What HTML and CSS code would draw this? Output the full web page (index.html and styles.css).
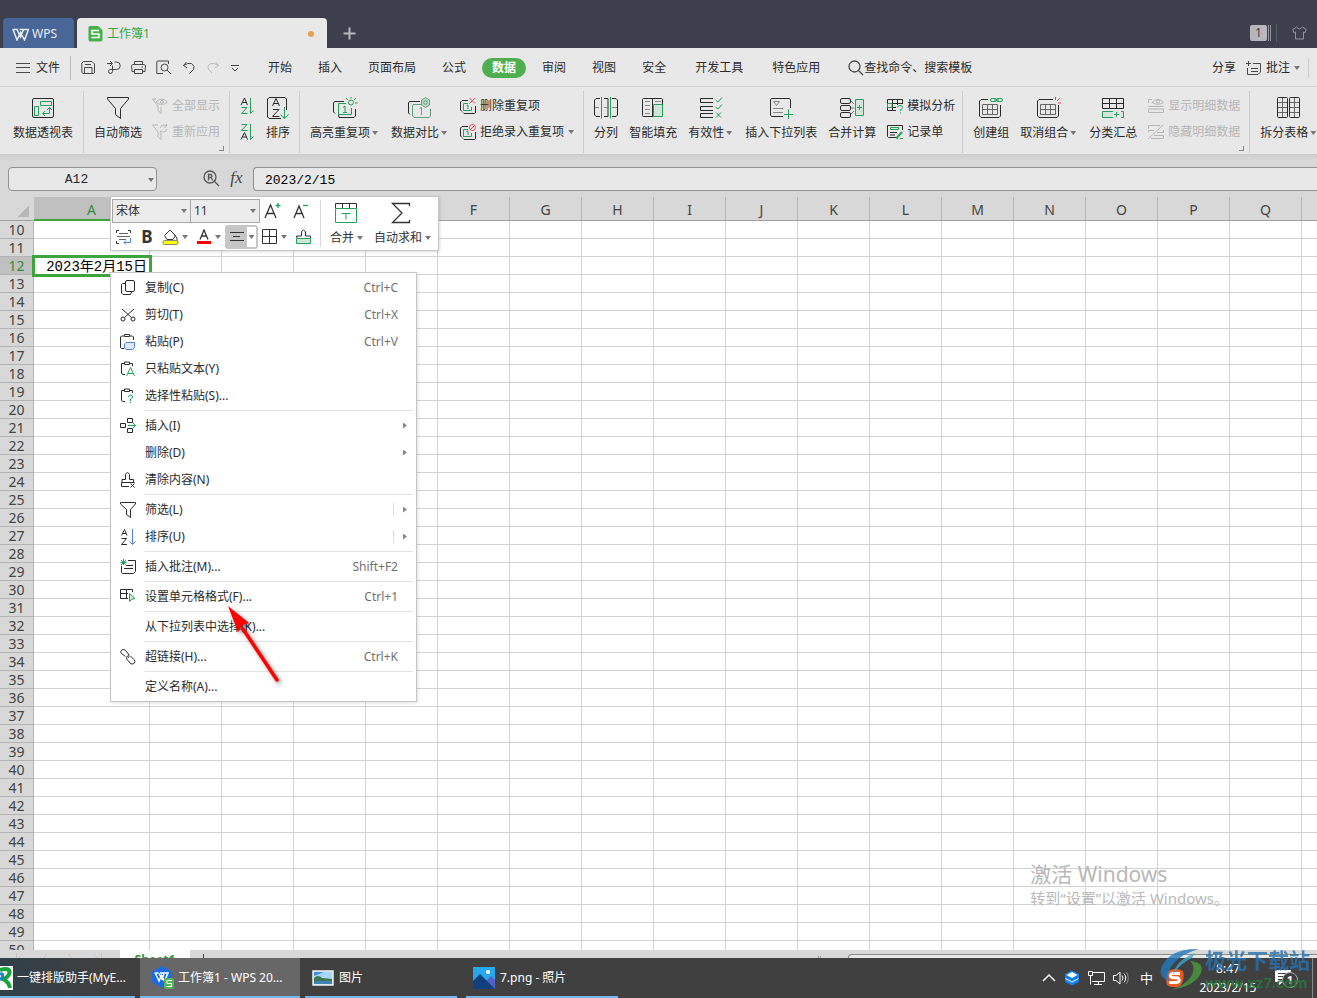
FILE: index.html
```html
<!DOCTYPE html>
<html lang="zh-CN">
<head>
<meta charset="utf-8">
<title>工作簿1 - WPS</title>
<link rel="stylesheet" href="styles.css">
</head>
<body>
<div class="app">
  <header class="titlebar">
    <button class="wps-tab"><svg width="17" height="13" viewBox="0 0 17 13" stroke-width="1.5"><path d="M.5 1.5H6M7.5 1.5H16.5L12.5 12 8.500 4.500 5 12 1 1.500M5 1.500 8.500 9 11.500 1.500"/></svg>WPS</button>
    <button class="doc-tab"><svg width="15" height="17" viewBox="0 0 15 17"><path fill="#45b04a" stroke="none" d="M2 1H10L14.500 5V14.500Q14.500 16.500 12.500 16.500H2Q.5 16.500 .5 14.500V2.500Q.5 1 2 1Z"/><path stroke="#fff" stroke-width="1.500" d="M11 5.500H4V9H11V12.500H3.500"/></svg><span>工作簿1</span><i class="dot"></i></button>
    <button class="plus" aria-label="新建"><svg width="13" height="13" viewBox="0 0 13 13" stroke-width="2"><path d="M6.500 .5V12.500M.5 6.500H12.500"/></svg></button>
    <div class="title-right"><span class="count">1</span><svg width="4" height="16" viewBox="0 0 4 16"><path d="M1.500 0V16M3.500 0V16"/></svg><i class="bar"></i><svg width="15" height="14" viewBox="0 0 15 14"><path d="M4.500 1 .8 3.500 1.800 6.500 3.500 6V13H11.500V6L13.200 6.500 14.200 3.500 10.500 1Q7.500 4.500 4.500 1Z"/></svg></div>
  </header>

  <nav class="menubar">
    <button class="file"><svg width="14" height="10" viewBox="0 0 14 10"><path d="M0 .5H14M0 4.500H14M0 9.500H14"/></svg>文件</button>
    <div class="quick">
      <button aria-label="保存"><svg width="15" height="15" viewBox="0 0 15 15"><path d="M2.500 1.500H11L13.500 4V12.500L12.500 13.500H2L.8 12.500V3ZM3.500 13V7.500H11V13M4 4.500H10"/></svg></button>
      <button aria-label="输出"><svg width="15" height="15" viewBox="0 0 15 15"><path d="M1 3.500H6M4 1 6.500 3.500 4 6M8.500 2H10.500A3.500 3.500 0 0 1 10.500 9.500H4A2 2 0 1 0 6.500 11.500V5.500"/></svg></button>
      <button aria-label="打印"><svg width="15" height="15" viewBox="0 0 15 15"><path d="M3.500 4.500V1.500H11.500V4.500M3 11.500H1L.5 5.500 2 4.500H13L14.500 5.500 14 11.500H12M3.500 9.500H11.500V13.500H3.500Z M10.500 7H12"/></svg></button>
      <button aria-label="打印预览"><svg width="16" height="15" viewBox="0 0 16 15"><path d="M12.500 4V1H1.500L.8 2V13.500H7"/><circle cx="8.500" cy="7.500" r="3.500"/><path d="M11 10 15 14"/></svg></button>
      <button aria-label="撤销"><svg width="14" height="15" viewBox="0 0 14 15"><path d="M4.500 2 1.500 5.500 5 8M1.500 5.500Q6 2.500 9.500 3.500 13.500 6 11.500 9.500L7.500 13.500"/></svg></button>
      <button class="off" aria-label="恢复"><svg width="14" height="15" viewBox="0 0 14 15"><path d="M9.500 2 12.500 5.500 9 8M12.500 5.500Q8 2.500 4.500 3.500 .5 6 2.500 9.500L6 13"/></svg></button>
      <button aria-label="自定义"><svg width="10" height="15" viewBox="0 0 10 15"><path d="M1 5.500H9M2 8 5 11 8 8"/></svg></button>
    </div>
    <div class="tabs"><button>开始</button><button>插入</button><button>页面布局</button><button>公式</button><button class="on">数据</button><button>审阅</button><button>视图</button><button>安全</button><button class="wide">开发工具</button><button class="wide">特色应用</button></div>
    <button class="search"><svg width="16" height="16" viewBox="0 0 16 16" stroke-width="1.3"><circle cx="6.500" cy="6.500" r="5.500"/><path d="M10.500 10.500 15 15"/></svg>查找命令、搜索模板</button>
    <div class="share"><button>分享</button><button class="note"><svg width="16" height="15" viewBox="0 0 16 15"><path d="M7 2.500H14.500V11L12 13.500H1.500V7M0 2.500H5M2.500 0V5M5 7.500H12M5 10.500H12"/></svg>批注<i class="caret"></i></button></div>
  </nav>

  <section class="ribbon">
    <div class="group first">
      <button class="big"><svg width="24" height="22" viewBox="0 0 24 22"><rect x="1.500" y="1.500" width="21" height="19" rx="1.500"/><path class="g" d="M9.500 4.500H20.500V8.500H9.500ZM3.500 9.500H7.500V18.500H3.500ZM12 16.500H18.500V10.500M16 13 18.500 10.500 21 13M14 14 11.500 16.500 14 19"/></svg><span>数据透视表</span></button>
    </div>
    <div class="group g2">
      <button class="big"><svg width="24" height="24" viewBox="0 0 24 24"><path d="M1.500 1.500H22.500V3L14.500 12.500V22.500L9.500 18.500V12.500L1.500 3Z"/></svg><span>自动筛选</span></button>
      <div class="stack"><button disabled><svg width="16" height="16" viewBox="0 0 16 16"><path d="M4 1H.5L6 8V12.500L9 15.500V9M4 4Q9.500-2 15.500 4 9.500 9 4 4Z"/><circle cx="10" cy="3.800" r="1.500"/></svg>全部显示</button><button disabled><svg width="16" height="16" viewBox="0 0 16 16"><path d="M6 1H.5L6 8V12.500L9 15.500V9M8 4A4 4 0 0 1 14.500 2V0M14.500 3H12M15 5A4 4 0 0 1 8.500 7V8.500"/></svg>重新应用</button></div>
      <i class="corner"></i>
    </div>
    <div class="group">
      <div class="stack az"><button aria-label="升序"><svg width="15" height="18" viewBox="0 0 15 18"><path d="M1 8 4.500 1 7.500 8M2.500 5.500H6.500"/><path class="g" d="M1.500 10.500H7L1.500 16.500H7.500M10.500 1V16.500L13.500 13.500"/></svg></button><button aria-label="降序"><svg width="15" height="18" viewBox="0 0 15 18"><path class="g" d="M1.500 1.500H7L1.500 7.500H7.500M10.500 1V16.500L13.500 13.500"/><path d="M1 16.500 4.500 9.500 7.500 16.500M2.500 14H6.500"/></svg></button></div>
      <button class="big"><svg width="24" height="24" viewBox="0 0 24 24"><path d="M15 22.500H3L1.500 21V3L3 1.500H19L20.500 3V14M6.500 10 10 2.500 13.500 10M7.500 7.500H12.500M7 13.500H13L6.500 20.500H13.500"/><path class="g" d="M18.500 11V22.500M14.500 18.500 18.500 22.500 22.500 18.500"/></svg><span>排序</span></button>
    </div>
    <div class="group">
      <button class="big drop"><svg width="26" height="22" viewBox="0 0 26 22"><path d="M12 4.500H2.500L1.500 6V15L3 16.500M23.500 12V19L22 20.500H7L6.500 17"/><path class="g" d="M14 6.500H6.500V17.500H19.500V11M11 10.500 13 9V15M11 15.500H15"/><circle class="g" cx="19" cy="5.500" r="2.500"/><path class="g" d="M19 0V1.500M14 1 16 3M24 1 22 3M23 6H25.500"/></svg><span>高亮重复项</span><i class="caret"></i></button>
      <button class="big drop"><svg width="26" height="22" viewBox="0 0 26 22"><path d="M13 4.500H2.500L1.500 6V16L3 17.500"/><path class="t" d="M14 7.500H6L5.500 9V19L7 20.500H22L23.500 19V12M12.500 11.500 14.500 10.500V18"/><path class="t" fill="#bed8ca" d="M18.500 .5 22.500 3V8L18.500 10.500 14.500 8V3Z"/><circle class="t" cx="18.500" cy="5.500" r="1.800"/></svg><span>数据对比</span><i class="caret"></i></button>
      <div class="stack"><button><svg width="16" height="16" viewBox="0 0 16 16"><path d="M8 2.500H2L.5 4V12L2 13.500M15.500 8V14.500L14.500 15.500H4L3 14.500"/><path class="g" d="M8 5.500H3.500V12.500H11.500V9M6.500 7.500 8 7V11"/><path class="r" d="M9.500 0 15 5.500M15 0 9.500 5.500"/></svg>删除重复项</button><button><svg width="16" height="16" viewBox="0 0 16 16"><path d="M8 2.500H2L.5 4V12L2 13.500M15.500 8V14.500L14.500 15.500H4L3 14.500"/><path class="g" d="M8 5.500H3.500V12.500H11.500V9M6.500 7.500 8 7V11"/><circle class="r" cx="12.500" cy="3.500" r="3"/><path class="r" d="M10.500 5.500 14.500 1.500"/></svg>拒绝录入重复项<i class="caret"></i></button></div>
    </div>
    <div class="group tight">
      <button class="big"><svg width="24" height="22" viewBox="0 0 24 22"><path d="M6 1.500H2L.5 3V18L2 19.500H6M10 1.500H14V19.500H10M18 1.500H22L23.500 3V18L22 19.500H18"/><path stroke="#888" d="M1 10.500H5M10 10.500H14M18 10.500H23"/><path class="g" d="M7.500 0V21.500M16.500 0V21.500"/></svg><span>分列</span></button>
      <button class="big"><svg width="24" height="22" viewBox="0 0 24 22"><rect x="1.500" y="1.500" width="20" height="18" rx="1"/><path d="M11.500 2V19"/><path stroke="#888" d="M4 4.500H9M4 8.500H9M4 12.500H9M4 16.500H9M14 4.500H20"/><path class="g" fill="#d2e5da" d="M12.500 7.500H21.500V19.500H12.500Z"/></svg><span>智能填充</span></button>
      <button class="big drop"><svg width="24" height="22" viewBox="0 0 24 22"><path d="M14 1.500H1.500V5.500H14M14 9.500H1.500V13.500H14M14 16.500H1.500V20.500H14"/><path class="g" d="M16.500 3 19 5 23 .5M16.500 10 19 12 23 7.500M17 15.500 22 20.500M22 15.500 17 20.500"/></svg><span>有效性</span><i class="caret"></i></button>
      <button class="big"><svg width="24" height="24" viewBox="0 0 24 24"><path d="M14 20.500H2.500L1.500 19V4L2.500 2.500H20.500L21.500 4V12"/><path stroke="#888" d="M4.500 5.500H10.500L7.500 9.500ZM4 12.500H14M4 16.500H14"/><path class="g" d="M19.500 13.500V23M15 18.500H24"/></svg><span>插入下拉列表</span></button>
      <button class="big"><svg width="24" height="22" viewBox="0 0 24 22"><rect x=".5" y="1.500" width="10" height="5" rx="1.500"/><rect x=".5" y="8.500" width="10" height="5" rx="1.500"/><rect x=".5" y="15.500" width="10" height="5" rx="1.500"/><path stroke="#777" d="M11 4 14 7M11 11H14M11 17 14 14"/><path class="g" fill="#d2e5da" d="M15.500 2.500H23.500V18.500H15.500Z"/><path class="g" d="M17 10.500H22M19.500 8V13"/></svg><span>合并计算</span></button>
      <div class="stack"><button><svg width="16" height="16" viewBox="0 0 16 16"><path d="M9 12.500H.5V1.500H15.500V6M5.500 1.500V12M10.500 1.500V7M1 5.500H15M1 9.500H9"/><path class="g" d="M.5 5.500H5V9.500H.5ZM10.500 9.500Q10.500 7.500 13 7.500 15.500 7.500 15.500 9.500 15.500 11 13.500 11.500V13M13.500 14.500V15.500"/></svg>模拟分析</button><button><svg width="16" height="16" viewBox="0 0 16 16"><path d="M9 13.500H1.500L.5 12.500V1.500H15.500V6M3 8.500H10M3 11H8"/><path class="g" d="M3.500 3.500H11.500V5.500H3.500Z"/><path class="g" stroke-width="2" d="M15 8 10 13.500"/><path class="g" d="M9.500 13V14.500H11M13 14.500H16"/></svg>记录单</button></div>
    </div>
    <div class="group">
      <button class="big"><svg width="26" height="22" viewBox="0 0 26 22"><path d="M10 2.500H3L1.500 4V19L3 20.500H21L22.500 19V8"/><path stroke="#666" d="M4.500 7.500H19.500V17.500H4.500ZM4.500 12.500H19.500M9.500 7.500V17.500M14.500 7.500V17.500"/><rect class="g" x="12.500" y="1.500" width="6" height="3" rx="1.500"/><rect class="g" x="18.500" y="1.500" width="6" height="3" rx="1.500"/><path class="g" d="M16 3H21"/></svg><span>创建组</span></button>
      <button class="big drop"><svg width="26" height="22" viewBox="0 0 26 22"><path d="M17 2.500H3L1.500 4V19L3 20.500H21L22.500 19V8"/><path stroke="#666" d="M4.500 7.500H19.500V17.500H4.500ZM4.500 12.500H19.500M9.500 7.500V17.500M14.500 7.500V17.500"/><path class="r" d="M19.500 0V3M21 4 24 1M22 6H25"/></svg><span>取消组合</span><i class="caret"></i></button>
      <button class="big"><svg width="24" height="22" viewBox="0 0 24 22"><path d="M1.500 1.500H22.500V11.500H1.500ZM1.500 6.500H22.500M8.500 1.500V11.500M15.500 1.500V11.500"/><path class="g" fill="#d2e5da" d="M12 14.500H1.500V20.500H12M20 14.500H22.500V20.500H20"/><path class="g" d="M13 17.500H18M15.500 15V20"/></svg><span>分类汇总</span></button>
      <div class="stack"><button disabled><svg width="16" height="16" viewBox="0 0 16 16"><path d="M4 1.500H.5V5M4 4.500Q10-2 15.500 4.500 10 8 4 4.500ZM.5 8.500H15.500M.5 11H15.500V14.500H.5Z"/><circle cx="10" cy="3.500" r="1.500"/></svg>显示明细数据</button><button disabled><svg width="16" height="16" viewBox="0 0 16 16"><path d="M0 15 15.500 .5M.5 4.500V1.500H12M.5 8V6.500H6M9 8.500H15.500V6M6 11.500H15.500V14.500H3"/></svg>隐藏明细数据</button></div>
      <i class="corner"></i>
    </div>
    <div class="group last">
      <button class="big drop"><svg width="24" height="22" viewBox="0 0 24 22"><rect x=".5" y=".5" width="10" height="20" rx="1"/><rect x="12.500" y=".5" width="10" height="20" rx="1"/><path stroke="#666" d="M5.500 1V20M17.500 1V20M1 5.500H10M1 10.500H10M1 15.500H10M13 5.500H22M13 10.500H22M13 15.500H22"/></svg><span>拆分表格</span><i class="caret"></i></button>
    </div>
  </section>

  <div class="formula">
    <div class="namebox"><input aria-label="名称框" value="A12"><i class="caret"></i></div>
    <button class="find" aria-label="查找"><svg width="17" height="17" viewBox="0 0 17 17" stroke-width="1.300"><circle cx="7" cy="7" r="6"/><path d="M11.500 11.500 16 16M5.500 10.500V4.500H8Q10 6 8 7.500H5.500M8 7.500 10 10.500"/></svg></button>
    <button class="fx">fx</button>
    <input class="fbox" aria-label="编辑栏" value="2023/2/15">
  </div>

  <main class="sheet">
    <table class="grid" id="grid"><thead><tr></tr></thead><tbody></tbody></table>
    <div class="watermark"><p class="w1">激活 Windows</p><p class="w2">转到“设置”以激活 Windows。</p></div>
  </main>

  <div class="sheetbar"><div class="arrows"><svg width="90" height="12" viewBox="0 0 90 12"><path d="M2.500 0V12M9 1 4 6 9 11M33 1 28 6 33 11M54 1 59 6 54 11M80 1 85 6 80 11M87.500 0V12"/></svg></div><button class="sheet-tab">Sheet1</button><button class="add" aria-label="新建工作表"></button><i class="grip"></i><div class="scroll"></div></div>

  <footer class="taskbar">
    <button class="task t1"><svg width="13" height="24" viewBox="0 0 13 24"><path fill="#fff" stroke="none" d="M0 0H13V24H0Z"/><path stroke="#18a43c" stroke-width="4" d="M0 4Q10 1 9.500 7 8 12 3 13 9 16 10 22"/><path stroke="#1b80d0" stroke-width="3" d="M0 8Q4 7 2 12L0 14"/></svg><span>一键排版助手(MyE...</span></button>
    <button class="task t2"><svg width="24" height="24" viewBox="0 0 24 24"><path fill="#1d6be0" stroke="none" d="M11 0 21 5.500V16L11 22 1 16V5.500Z"/><path stroke="#fff" stroke-width="1.500" d="M3.500 7H7.500M9 7H17L13.500 15 10.500 9.500 8 15 4.500 7.500M8 7.500 11 13 13 8"/><rect x="13" y="12" width="10" height="11" rx="2" fill="#54b45a" stroke="none"/><path stroke="#fff" d="M21 14.500H16V17.500H20.500V20.500H15.500"/></svg><span>工作簿1 - WPS 20...</span></button>
    <button class="task t3"><svg width="22" height="16" viewBox="0 0 22 16"><path fill="#a6d7fa" stroke="#eee" stroke-width="1.500" d="M1 1H21V15H1Z"/><path fill="#4289de" stroke="none" d="M2 2H12L2 6Z"/><path fill="#3d7451" stroke="none" d="M2 8Q6 4 10 8L20 9V11H2Z"/><path fill="#3d84b0" stroke="none" d="M2 11H20V14H2Z"/></svg><span>图片</span></button>
    <button class="task t4"><svg width="22" height="22" viewBox="0 0 22 22"><path fill="#28a8ea" stroke="none" d="M0 0H22V22H0Z"/><path fill="#5260cc" stroke="none" d="M11 16 18 9 22 13V22H14Z"/><path fill="#123f7d" stroke="none" d="M0 14 7 7 22 22H0Z"/><circle cx="15" cy="5" r="2" fill="#fff" stroke="none"/></svg><span>7.png - 照片</span></button>
    <div class="tray">
      <svg width="14" height="16" viewBox="0 0 14 16" stroke-width="1.500"><path d="M1 11 7 5 13 11"/></svg>
      <svg width="16" height="16" viewBox="0 0 16 16"><path fill="#1480f0" stroke="none" d="M8 .5 15 4V12L8 15.500 1 12V4Z"/><path fill="#fff" stroke="none" d="M8 2 13.500 5 8 8 2.500 5Z"/><path stroke="#fff" d="M1.500 8.500 8 12 14.500 8.500"/></svg>
      <svg width="17" height="16" viewBox="0 0 17 16"><path d="M5 2.500H16.500V11.500H4M10.500 12V14.500M6 14.500H14M.5 1.500H4.500V5.500H.5ZM2.500 5.500V14.500"/></svg>
      <svg width="17" height="16" viewBox="0 0 17 16"><path d="M.5 5.500H3L7 2V14L3 10.500H.5ZM9 5.500Q11 8 9 10.500M11 3.500Q14.500 8 11 12.500"/><path stroke="#888" d="M13.500 2Q17 8 13.500 14"/></svg>
      <span class="ime">中</span>
      <svg width="20" height="20" viewBox="0 0 20 20"><path fill="#e85b24" stroke="none" d="M3 3Q10-1 18 3 20 12 15 18 8 21 2 17 0 9 3 3Z"/><path stroke="#fff" stroke-width="3" d="M15 5.500H7Q3.500 8 7 9.500L13 10Q16 13 12 14.500H4"/></svg>
      <div class="clock"><span>8:47</span><span>2023/2/15</span></div>
      <div class="notify"><svg width="18" height="18" viewBox="0 0 18 18"><path fill="#fff" stroke="none" d="M1 1H17V13H9L5 16V13H1Z"/><path stroke="#3e3e3e" d="M4 4.500H14M4 7.500H14M4 10.500H11"/></svg><b>1</b></div>
    </div>
  </footer>

  <div class="mini">
    <div class="mini-left">
      <div class="mrow">
        <div class="sel s1"><select aria-label="字体"><option>宋体</option></select><i class="caret"></i></div><div class="sel s2"><select aria-label="字号"><option>11</option></select><i class="caret"></i></div>
        <button class="fs" aria-label="增大字号"><svg width="18" height="18" viewBox="0 0 18 18" stroke-width="1.300"><path d="M1 16 6.500 3 12 16M3 11.500H10"/><path class="g" d="M14 1V6M11.500 3.500H16.500"/></svg></button>
        <button class="fs fs2" aria-label="减小字号"><svg width="18" height="18" viewBox="0 0 18 18" stroke-width="1.300"><path d="M1 16 6 4 11 16M3 11.500H9"/><path class="g" d="M10 3.500H15"/></svg></button>
      </div>
      <div class="mrow row2">
        <button aria-label="格式"><svg width="17" height="16" viewBox="0 0 17 16"><path d="M1.500 4V1.500H4M13 1.500H15.500V4M1.500 12V14.500H4"/><path stroke="#666" d="M4 4.500H13M2 7.500H15M4 10.500H11"/><path stroke="#4a80d8" d="M15.500 9V13.500H9M11 11.500 9 13.500 11 15.500"/></svg></button>
        <button class="bold" aria-label="加粗">B</button>
        <button class="d" aria-label="填充颜色"><svg width="17" height="16" viewBox="0 0 17 16"><path d="M8 1 2.500 6.500 5 10.500H11L13.500 6.500ZM11 4 15 9V12"/><rect x="1" y="11.500" width="15" height="4" rx="1.500" fill="#ff0" stroke="#888"/></svg><i class="caret"></i></button>
        <button class="d" aria-label="字体颜色"><svg width="16" height="16" viewBox="0 0 16 16"><path stroke-width="1.300" d="M4 10.500 8 1 12 10.500M5.500 7H10.500"/><path stroke="#f00" stroke-width="3" d="M1 13.500H15"/></svg><i class="caret"></i></button>
        <button class="align" aria-label="对齐"><svg width="16" height="10" viewBox="0 0 16 10"><path d="M1 .5H15M4 4.500H11M1 8.500H15"/></svg><span><i class="caret"></i></span></button>
        <button class="d" aria-label="边框"><svg width="16" height="16" viewBox="0 0 16 16"><path d="M.5 .5H14.500V14.500H.5ZM7.500 .5V14.500M.5 7.500H14.500"/></svg><i class="caret"></i></button>
        <button aria-label="清除"><svg width="17" height="16" viewBox="0 0 17 16"><path d="M2 9 1.500 7H6.500V2.500Q8.500-.5 10.500 2.500V7H15.500V9"/><path class="g" fill="#d2e5da" d="M1.500 9.500H15.500V14.500H1.500Z"/></svg></button>
      </div>
    </div>
    <div class="mini-right">
      <button class="mbig"><svg width="24" height="22" viewBox="0 0 24 22"><path d="M1.500 6V1.500H22.500V6M8.500 1.500V6M15.500 1.500V6"/><path class="g" d="M1.500 6.500H22.500V20.500H1.500ZM7.500 11.500H16.500M12 11.500V17.500"/></svg><span>合并<i class="caret"></i></span></button>
      <button class="mbig"><svg width="22" height="22" viewBox="0 0 22 22" stroke-width="1.300"><path d="M19.500 4V1.500H2.500L12 11 2.500 20.500H19.500V18"/></svg><span>自动求和<i class="caret"></i></span></button>
    </div>
  </div>

  <div class="context" role="menu">
    <button><svg viewBox="0 0 16 16"><rect x="5.500" y=".5" width="9" height="11" rx="1.500"/><path d="M5 3.500H2.500L1.500 4.500V13L3 14.500H10.500L11.500 12"/></svg><span>复制(C)</span><kbd>Ctrl+C</kbd></button>
    <button><svg viewBox="0 0 16 16"><path d="M2 2 11.500 10.500M14 2 4.500 10.500"/><circle cx="3" cy="12" r="2"/><circle cx="13" cy="12" r="2"/></svg><span>剪切(T)</span><kbd>Ctrl+X</kbd></button>
    <button><svg viewBox="0 0 16 16"><path d="M4 2H1.500L.5 3V13.500L1.500 14.500H4M10 2H12.500L13.500 3V6M4.500 .5H9.500V2.500H4.500Z"/><path stroke="#4b84d8" fill="#dbe9fb" d="M6 8.500H14.500V13.500L12.500 15.500H6L4.500 14V10Z"/></svg><span>粘贴(P)</span><kbd>Ctrl+V</kbd></button>
    <button><svg viewBox="0 0 16 16"><path d="M4 2.500H1.500V12.500L3 13.500H5M10 2.500H12.500V5M4.500 1H9.500V3.500H4.500Z"/><path class="g" d="M6.500 15 10.500 6.500 14.500 15M8 12.500H13"/></svg><span>只粘贴文本(Y)</span></button>
    <button><svg viewBox="0 0 16 16"><path d="M4 2.500H1.500V12.500L3 13.500H5M10 2.500H12.500V5M4.500 1H9.500V3.500H4.500Z"/><path class="g" d="M8.500 9Q8.500 7 10.500 7 13 7 12.500 9.500L10.500 11V13M10.500 14V15"/></svg><span>选择性粘贴(S)...</span></button>
    <hr>
    <button><svg viewBox="0 0 16 16"><path d="M7.500 .5H12.500V4.500H7.500ZM.5 5.500H5.500V9.500H.5ZM7.500 10.500H12.500V14.500H7.500Z"/><path class="g" d="M8 7.500H15.500M13 5 15.500 7.500 13 10"/></svg><span>插入(I)</span><i class="more"></i></button>
    <button><svg viewBox="0 0 16 16"></svg><span>删除(D)</span><i class="more"></i></button>
    <button><svg viewBox="0 0 16 16"><path d="M9 14.500H1.500V10.500H14.500M2 10V7.500H5.500V2.500Q7.500-1.500 9.500 2.500V7.500H13.500V10M10.500 11.500 14.500 15.500M14.500 11.500 10.500 15.500"/></svg><span>清除内容(N)</span></button>
    <hr>
    <button><svg viewBox="0 0 16 16"><path d="M.5 .5H15.500V2L10.500 7.500V15.500L6.500 12.500V7.500L.5 2Z"/></svg><span>筛选(L)</span><i class="more split"></i></button>
    <button><svg viewBox="0 0 16 16"><path d="M1.500 6.500 4.500 .5 7 6.500M2.500 4.500H6M1.500 9.500H6.500L1.500 15.500H7"/><path stroke="#4b84d8" d="M12.500 0V15.500M9.500 12.500 12.500 15.500 15.500 12.500"/></svg><span>排序(U)</span><i class="more split"></i></button>
    <hr>
    <button><svg viewBox="0 0 16 16"><path d="M8 1.500H15.500V12.500L13.500 14.500H2.500L1.500 13.500V7M6 6.500H13M4 9.500H13"/><path class="g" d="M3.500 0V6M.5 3.500H6.500M1 1 6 6M6 1 1 6"/></svg><span>插入批注(M)...</span><kbd>Shift+F2</kbd></button>
    <hr>
    <button><svg viewBox="0 0 16 16"><path d="M8 9.500H.5V.5H12.500V3M6.500 .5V9.500M.5 4.500H8"/><path class="g" fill="#d2e5da" d="M9.500 4.500V12.500L11.500 10.500 15 9.500Z"/></svg><span>设置单元格格式(F)...</span><kbd>Ctrl+1</kbd></button>
    <hr>
    <button><svg viewBox="0 0 16 16"></svg><span>从下拉列表中选择(K)...</span></button>
    <hr>
    <button><svg viewBox="0 0 16 16"><path d="M5.500 7.500 1.500 4.500Q-.5 2.500 2 .8 4 0 5.500 1.500L8.500 5Q10 7.500 8 9M10.500 7 14 10.500Q16 13 14 14.500 12 16 10 14L7 10.500Q5.500 8.500 8 6.500"/></svg><span>超链接(H)...</span><kbd>Ctrl+K</kbd></button>
    <hr>
    <button><svg viewBox="0 0 16 16"></svg><span>定义名称(A)...</span></button>
  </div>

  <svg class="pointer" width="64" height="90" viewBox="0 0 64 90"><path stroke="#f00" stroke-width="3.500" stroke-linecap="round" d="M17 27 51 78"/><path fill="#f00" stroke="none" d="M2 4 23 21 17 23 12 30Z"/></svg>

  <div class="brand">
    <svg width="46" height="44" viewBox="0 0 46 44"><path fill="#2379bd" stroke="none" d="M40 1Q12 0 3 18-2 29 10 33 7 24 15 15 24 5 40 1Z"/><path fill="#3aa6d0" stroke="none" d="M36 5Q16 13 14 27 20 16 33 10Z"/><path fill="#4a9a3c" stroke="none" d="M31 13Q46 14 42 25 36 38 12 42 31 35 34 24 36 18 31 13Z"/></svg>
    <div><p class="b1">极光下载站</p><p class="b2">www.xz7.com</p></div>
  </div>
</div>
<script src="grid.js"></script>
</body>
</html>
```
FILE: grid.js
```js
const letters = 'ABCDEFGHIJKLMNOPQ'.split('').concat('');
const table = document.getElementById('grid');
table.tHead.rows[0].innerHTML = '<th class="all"></th>' +
  letters.map((c, i) => `<th class="${i ? 'col' : 'col wide sel'}">${c}</th>`).join('');
let rows = '';
for (let r = 10; r <= 50; r++) {
  rows += `<tr><th class="${r === 12 ? 'sel' : ''}">${r}</th>` +
    letters.map((c, i) => r === 12 && i === 0 ? '<td class="cell">2023年2月15日</td>' : '<td></td>').join('') + '</tr>';
}
table.tBodies[0].innerHTML = rows;
```
FILE: styles.css
```css
* { box-sizing: border-box; }
body { margin: 0; font: 12px/16px "Noto Sans", "Noto Sans CJK SC", sans-serif; color: #2b2b2b; }
button, input, select { font: inherit; color: inherit; border: 0; background: none; padding: 0; margin: 0; border-radius: 0; }
button { white-space: nowrap; }
p { margin: 0; }
svg { display: block; flex: none; fill: none; stroke: currentColor; }
.g { stroke: #23a05a; }
.t { stroke: #5fa07c; }
.r { stroke: #dc5050; }
.caret { flex: none; width: 6px; height: 4px; background: #777; clip-path: polygon(0 0, 100% 0, 50% 100%); }
.app { position: relative; height: 100vh; display: flex; flex-direction: column; overflow: hidden; background: #d8d8d8; }

.titlebar { flex: none; height: 48px; padding: 18px 10px 0 3px; display: flex; background: #3d404c; color: #c8c8cc; }
.wps-tab { width: 71px; margin-right: 3px; padding: 2px 0 0 9px; display: flex; align-items: center; gap: 3px; background: #486698; color: #e8ecf4; border-radius: 4px 4px 0 0; }
.doc-tab { width: 250px; padding: 1px 13px 0 11px; display: flex; align-items: center; gap: 4px; background: #e8e8e8; color: #36a83c; border-radius: 4px 4px 0 0; }
.dot { width: 6px; height: 6px; margin-left: auto; border-radius: 50%; background: #e8a052; }
.plus { padding: 0 16px; color: #b6b7bc; }
.title-right { margin-left: auto; display: flex; align-items: center; color: #92939b; }
.count { width: 17px; height: 16px; text-align: center; background: #b6b6bc; color: #40424a; border-radius: 2px; }
.bar { width: 1px; height: 18px; margin: 0 15px 0 5px; background: #5a5c66; }

.menubar { flex: none; height: 39px; padding-top: 2px; display: flex; align-items: center; background: #e8e8e8; border-bottom: 1px solid #d4d4d4; }
.menubar svg { color: #484848; }
.file { height: 24px; padding: 0 10px 0 16px; display: flex; align-items: center; gap: 6px; border-right: 1px solid #bbb; }
.quick { display: flex; gap: 10px; padding-left: 10px; padding-bottom: 1px; }
.quick .off svg { color: #bbb; }
.tabs { display: flex; align-items: center; gap: 26px; padding-left: 28px; }
.tabs .on { height: 20px; padding: 0 10px; margin: 0 -10px; border-radius: 10px; background: #4fae50; color: #fff; font-weight: bold; }
.tabs .wide { margin-left: 3px; }
.search { display: flex; align-items: center; padding-left: 28px; }
.share { margin-left: auto; display: flex; align-items: center; height: 20px; margin-right: 8px; padding-right: 8px; gap: 10px; border-right: 1px solid #ccc; }
.note { display: flex; align-items: center; gap: 4px; }

.ribbon { flex: none; height: 68px; display: flex; background: #e8e8e8; border-bottom: 1px solid #ccc; color: #2b2b2b; }
.group { position: relative; flex: none; height: 62px; margin-top: 4px; padding: 5px 9px 0 10px; display: flex; gap: 11px; border-right: 1px solid #ccc; }
.first { padding: 5px 10px 0 13px; }
.g2 { gap: 10px; }
.tight { padding-right: 7px; }
.last { border: 0; }
.big { display: grid; grid-template-rows: 24px 16px; row-gap: 5px; align-content: start; justify-items: center; align-items: center; }
.drop { grid-template-columns: auto 10px; }
.drop svg { grid-column: 1 / 3; }
.stack { display: flex; flex-direction: column; gap: 10px; padding-top: 2px; }
.stack button { height: 16px; display: flex; align-items: center; gap: 4px; }
.stack button:disabled { color: #b6b6b6; }
.az { gap: 8px; padding-top: 1px; }
.az button { height: 18px; }
.corner { position: absolute; right: 5px; bottom: 2px; width: 5px; height: 5px; border: solid #888; border-width: 0 1px 1px 0; }

.formula { flex: none; height: 42px; padding-left: 8px; display: flex; align-items: flex-start; padding-top: 12px; background: linear-gradient(#cfcfcf, #d8d8d8 6px); }
.namebox, .fbox { height: 24px; background: #e8e8e8; border: 1px solid #929292; font: 13px/20px "Liberation Mono", monospace; padding-top: 2px; }
.namebox { flex: none; width: 149px; display: flex; align-items: center; border-radius: 4px; padding-right: 2px; }
.namebox input { flex: 1; min-width: 0; text-align: center; margin-right: 4px; }
.find { margin-left: 46px; padding-top: 3px; color: #555; }
.fx { width: 33px; font: italic 17px/22px "Liberation Serif", serif; color: #444; }
.fbox { flex: 1; min-width: 0; padding-left: 11px; border-right: 0; border-radius: 4px 0 0 4px; color: #000; }

.sheet { position: relative; flex: 1; min-height: 0; overflow: hidden; background: #fff; }
.grid { table-layout: fixed; border-collapse: separate; border-spacing: 0; width: 1374px; font-size: 14px; line-height: 17px; color: #444; }
.grid th { padding: 0; font-weight: normal; background: #d8d8d8; border: solid #b4b4b4; border-width: 0 1px 1px 0; }
.grid thead th { height: 24px; width: 72px; padding-top: 2px; border-bottom-color: #a0a0a0; }
.grid thead .all { width: 34px; background: linear-gradient(135deg, #d8d8d8 50%, #b8b8b8 50%) 18px 9px / 11px 11px no-repeat #d8d8d8; border-right-color: #d8d8d8; }
.grid thead .wide { width: 116px; }
.grid .sel { background: #c0c0c0; color: #378a3b; }
.grid thead .sel { border-bottom: 2px solid #3ea53e; }
.grid td { height: 18px; padding: 0; border: solid #d2d2d2; border-width: 0 1px 1px 0; }
.grid .cell { position: relative; padding: 3px 2px 0 0; text-align: right; white-space: nowrap; color: #000; font: 14px/14px "Liberation Mono", "Noto Sans CJK SC", monospace; outline: 3px solid #3ea53e; outline-offset: -1px; }
.watermark { position: absolute; right: 88px; bottom: 42px; color: #b8b8b8; }
.w1 { font-size: 21px; line-height: 28px; }
.w2 { font-size: 15px; line-height: 20px; }

.sheetbar { flex: none; height: 8px; overflow: hidden; display: flex; background: #d8d8d8; }
.arrows { width: 120px; padding: 3px 0 0 14px; color: #c4c4c4; }
.sheet-tab { width: 70px; height: 20px; background: #fff; color: #36953a; font-weight: bold; font-size: 12px; }
.add { width: 14px; height: 20px; margin-top: 4px; border-right: 1px solid #444; }
.grip { width: 3px; height: 10px; margin: 6px 0 0 614px; border: solid #999; border-width: 0 1px; }
.scroll { flex: 1; height: 20px; margin: 4px 0 0 27px; background: #e8e8e8; border: solid #8a8a8a; border-width: 1px 0 0 1px; border-radius: 4px 0 0 0; }

.taskbar { flex: none; height: 40px; display: flex; background: linear-gradient(90deg, #30404a, #404040 8%); color: #fff; }
.task { display: flex; align-items: center; text-align: left; border-bottom: 2px solid #76b9ed; margin-right: 5px; padding-top: 2px; }
.t1 { width: 135px; gap: 4px; }
.t2 { width: 160px; padding-left: 11px; gap: 3px; background: #676767; }
.t3 { width: 152px; padding-left: 7px; gap: 5px; margin-right: 9px; }
.t4 { width: 152px; padding-left: 7px; gap: 5px; }
.tray { margin-left: auto; padding-right: 8px; margin-right: 4px; border-right: 1px solid #888; display: flex; align-items: center; gap: 8px; }
.ime { font-size: 13px; padding: 0 4px 0 2px; }
.clock { width: 76px; display: flex; flex-direction: column; gap: 3px; text-align: center; margin-left: -3px; }
.notify { position: relative; width: 30px; }
.notify b { position: absolute; left: 8px; top: 3px; width: 16px; height: 16px; font-size: 11px; line-height: 14px; text-align: center; border: 1px solid #aaa; border-radius: 50%; background: #3e3e3e; }

.mini { position: absolute; left: 110px; top: 196px; width: 329px; height: 55px; padding: 2px 1px; display: flex; background: #fff; border: 1px solid #c6c6c6; box-shadow: 1px 1px 3px #0002; color: #333; }
.mini-left { width: 208px; }
.mrow { display: flex; align-items: center; height: 24px; }
.mini .sel { display: flex; align-items: center; height: 24px; padding-right: 3px; background: #ececec; border: 1px solid #a8a8a8; }
.s1 { width: 79px; }
.s2 { width: 70px; margin-left: -1px; }
.mini select { flex: 1; min-width: 0; padding-left: 3px; appearance: none; }
.fs { margin-left: 4px; }
.fs2 { margin-left: 11px; }
.row2 { height: 28px; padding-left: 3px; gap: 8px; }
.bold { width: 14px; font-size: 17px; font-weight: bold; }
.d { display: flex; align-items: center; gap: 3px; }
.align { flex: none; display: flex; align-items: center; width: 33px; height: 24px; margin: 0 -4px; padding: 2px 2px 2px 4px; justify-content: space-between; background: #c6c6c6; border-radius: 3px; }
.align span { display: flex; align-items: center; justify-content: center; width: 9px; height: 20px; background: #fff; }
.mini-right { flex: 1; display: flex; justify-content: space-between; margin-top: 1px; height: 47px; padding: 2px 6px 1px 9px; border-left: 1px solid #d8d8d8; }
.mbig { display: flex; flex-direction: column; align-items: center; justify-content: space-between; }
.mbig svg { margin-right: 2px; }
.mbig span { display: flex; align-items: center; gap: 3px; }

.context { position: absolute; left: 110px; top: 272px; width: 307px; padding: 1px 3px 1px 9px; background: #fff; border: 1px solid #c6c6c6; box-shadow: 1px 1px 3px #0002; }
.context button { display: flex; align-items: center; width: 100%; height: 27px; }
.context svg { width: 16px; height: 16px; margin-right: 9px; overflow: visible; }
.context kbd { margin-left: auto; padding-right: 15px; font: inherit; color: #707070; }
.context hr { height: 1px; margin: 1px 0 1px 25px; border: 0; background: #e2e2e2; }
.more { margin-left: auto; width: 20px; height: 13px; display: flex; align-items: center; padding-left: 10px; }
.more::before { content: ""; width: 4px; height: 6px; background: #888; clip-path: polygon(0 0, 100% 50%, 0 100%); }
.split { border-left: 1px solid #ddd; padding-left: 9px; }
.pointer { position: absolute; left: 226px; top: 602px; filter: drop-shadow(2px 2px 2px #0007); }
.brand { position: absolute; right: 7px; bottom: 6px; display: flex; opacity: .8; pointer-events: none; }
.b1 { font-size: 21px; line-height: 24px; font-weight: bold; color: #2672b0; }
.b2 { font-size: 15px; line-height: 20px; font-weight: bold; color: #287a3c; }
```
